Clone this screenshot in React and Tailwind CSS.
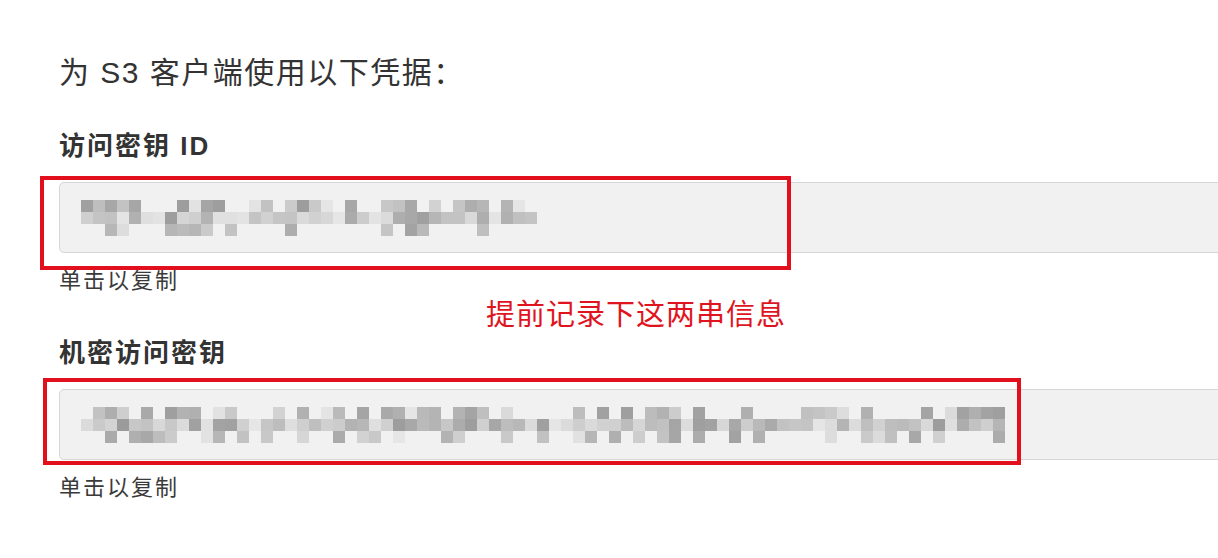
import React, { useMemo } from 'react';

// small seeded PRNG so the masked key looks the same on every render
function mulberry32(a) {
  return function () {
    a |= 0;
    a = (a + 0x6d2b79f5) | 0;
    let t = Math.imul(a ^ (a >>> 15), 1 | a);
    t = (t + Math.imul(t ^ (t >>> 7), 61 | t)) ^ t;
    return ((t ^ (t >>> 14)) >>> 0) / 4294967296;
  };
}

function Mosaic({ cols, seed }) {
  const cells = useMemo(() => {
    const rand = mulberry32(seed);
    const out = [];
    const fill = [0.6, 1, 0.4];
    for (let c = 0; c < cols; c++) {
      for (let r = 0; r < 3; r++) {
        if (rand() > fill[r]) continue;
        const g = Math.round(155 + rand() * 75);
        out.push({ x: c * 12, y: r * 12, g });
      }
    }
    return out;
  }, [cols, seed]);

  return (
    <svg width={cols * 12} height={36} className="block blur-[0.6px]">
      {cells.map((c, i) => (
        <rect key={i} x={c.x} y={c.y} width={12} height={12} fill={`rgb(${c.g},${c.g},${c.g})`} />
      ))}
    </svg>
  );
}

function KeyField({ label, cols, seed }) {
  return (
    <div className="flex flex-col">
      <div className="text-[26px] leading-[36px] font-bold text-[#333] tracking-[2px]">{label}</div>
      <div className="mt-[18px] h-[71px] w-[1300px] rounded-[5px] border border-[#d6d6d6] bg-[#f1f1f1] flex items-center pl-[21px]">
        <Mosaic cols={cols} seed={seed} />
      </div>
      <div className="mt-[14px] text-[22px] leading-[28px] text-[#3a3a3a] tracking-[2px]">单击以复制</div>
    </div>
  );
}

export default function App() {
  return (
    <div className="relative w-[1218px] h-[558px] overflow-hidden bg-white font-['Liberation_Sans','Noto_Sans_CJK_SC',sans-serif]">
      <div className="flex flex-col pl-[59px] pt-[53px]">
        <div className="text-[30px] leading-[40px] text-[#333] tracking-[1.5px]">为 S3 客户端使用以下凭据：</div>

        <div className="mt-[35px]">
          <KeyField label="访问密钥 ID" cols={38} seed={7} />
        </div>

        <div className="pl-[427px] text-[29px] leading-[40px] text-[#e0141e] tracking-[1px]">提前记录下这两串信息</div>

        <KeyField label="机密访问密钥" cols={77} seed={42} />
      </div>

      {/* red annotation frames drawn over the two fields */}
      <div className="absolute left-[40px] top-[176px] w-[751px] h-[94px] border-4 border-[#e2101c]" />
      <div className="absolute left-[43px] top-[378px] w-[978px] h-[87px] border-4 border-[#e2101c]" />
    </div>
  );
}
